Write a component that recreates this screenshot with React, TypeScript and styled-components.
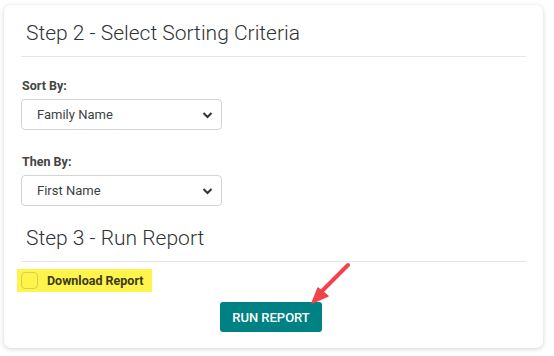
import React from "react";
import styled, { createGlobalStyle } from "styled-components";

const GlobalStyle = createGlobalStyle`
  body {
    margin: 0;
    background: #ffffff;
    font-family: Roboto, "Liberation Sans", Arial, sans-serif;
  }
`;

const Page = styled.div`
  padding: 5px 11px 8px 4px;
`;

const Card = styled.div`
  position: relative;
  width: 539px;
  height: 343px;
  box-sizing: border-box;
  background: #fff;
  border-radius: 7px;
  box-shadow: 0 1px 5px rgba(0, 0, 0, 0.18);
  padding: 13px 17px 0 17px;
`;

const Heading = styled.h2<{ $top?: number }>`
  margin: ${(p) => p.$top ?? 0}px 0 0 0;
  padding: 0 0 0 5px;
  font-size: 21px;
  font-weight: 300;
  line-height: 30px;
  color: #2f3338;
`;

const Divider = styled.hr`
  border: 0;
  border-top: 1px solid #e4e5e8;
  margin: 8px 0 0 0;
`;

const Field = styled.div<{ $top: number }>`
  margin-top: ${(p) => p.$top}px;
  display: flex;
  flex-direction: column;
  gap: 5px;
`;

const Label = styled.label`
  font-size: 12.5px;
  font-weight: 700;
  color: #444;
  line-height: 16px;
  padding-left: 1px;
`;

const SelectBox = styled.div`
  width: 201px;
  height: 31px;
  box-sizing: border-box;
  border: 1px solid #d4d4d4;
  border-radius: 4px;
  display: flex;
  align-items: center;
  justify-content: space-between;
  padding: 0 8px 0 15px;
  font-size: 13px;
  color: #3c3f44;
`;

const Chevron = () => (
  <svg width="11" height="8" viewBox="0 0 11 8">
    <path d="M1.5 2 L5.5 6 L9.5 2" fill="none" stroke="#333" strokeWidth="2" />
  </svg>
);

const Highlight = styled.label`
  margin: 7px 0 0 -4px;
  width: 135px;
  height: 23px;
  background: #fef44c;
  display: flex;
  align-items: center;
  gap: 9px;
  padding-left: 4px;
  box-sizing: border-box;
  font-size: 12.5px;
  font-weight: 700;
  color: #3a3a1c;
`;

const Box = styled.span`
  width: 17px;
  height: 17px;
  box-sizing: border-box;
  border: 1px solid #d9cf4a;
  border-radius: 4px;
`;

const Actions = styled.div`
  display: flex;
  justify-content: center;
  margin-top: 10px;
  padding-right: 5px;
`;

const Button = styled.button`
  width: 102px;
  height: 30px;
  background: #008184;
  color: #fff;
  border: 0;
  border-radius: 3px;
  font-family: Roboto, "Liberation Sans", Arial, sans-serif;
  font-size: 13px;
  font-weight: 500;
`;

const Arrow = styled.svg`
  position: absolute;
  left: 300px;
  top: 253px;
`;

export default function App() {
  return (
    <Page>
      <GlobalStyle />
      <Card>
        <Heading>Step 2 - Select Sorting Criteria</Heading>
        <Divider />
        <Field $top={21}>
          <Label>Sort By:</Label>
          <SelectBox>
            Family Name
            <Chevron />
          </SelectBox>
        </Field>
        <Field $top={24}>
          <Label>Then By:</Label>
          <SelectBox>
            First Name
            <Chevron />
          </SelectBox>
        </Field>
        <Heading $top={17}>Step 3 - Run Report</Heading>
        <Divider />
        <Highlight>
          <Box />
          Download Report
        </Highlight>
        <Actions>
          <Button>RUN REPORT</Button>
        </Actions>
        <Arrow width="50" height="50" viewBox="0 0 50 50">
          <path d="M44 7 L17 34" stroke="#f2434a" strokeWidth="4" strokeLinecap="round" />
          <path d="M8 45 L14 30 L24 38 Z" fill="#f2434a" stroke="#f2434a" strokeWidth="1.5" strokeLinejoin="round" />
        </Arrow>
      </Card>
    </Page>
  );
}
